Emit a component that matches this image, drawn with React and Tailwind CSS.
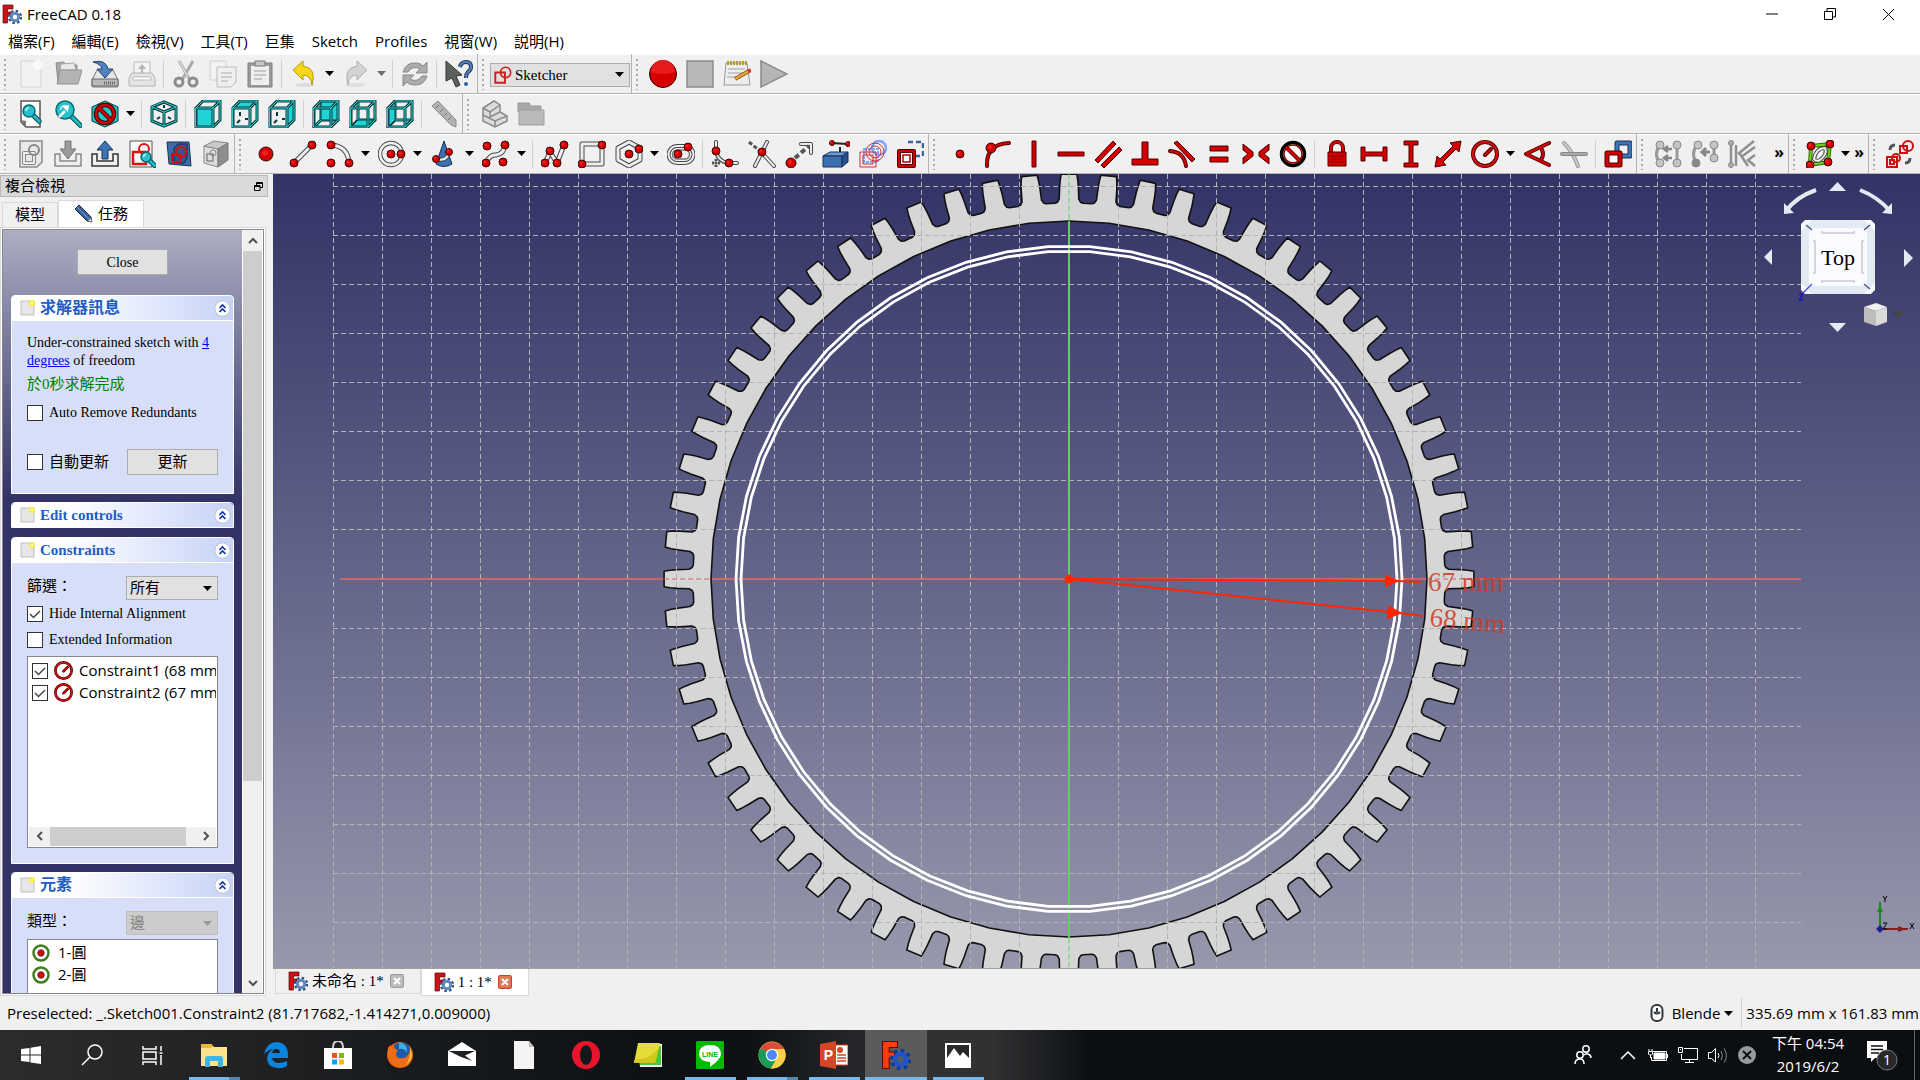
const SANS = "font-['Open_Sans','Noto_Sans_CJK_TC',sans-serif]";
const SERIF = "font-['Liberation_Serif','Noto_Sans_CJK_TC',serif]";

/* ---------- Icon helpers ---------- */

const Icon = ({ children, size = 28 }) => (
  <svg width={size} height={size} viewBox="0 0 28 28" fill="none" className="shrink-0">{children}</svg>
);

const Dot = ({ x, y, r = 4 }) => (
  <g>
    <circle cx={x} cy={y} r={r} fill="#d40000" stroke="#3a0a0a" />
    <circle cx={x - 1} cy={y - 1} r={r / 2.5} fill="#f02020" />
  </g>
);

const Tube = ({ d, w = 5, dark = '#44484a', light = '#eeeeec' }) => (
  <g strokeLinejoin="round" strokeLinecap="round">
    <path d={d} stroke={dark} strokeWidth={w} />
    <path d={d} stroke={light} strokeWidth={w - 2} />
  </g>
);

const Red = ({ d, w = 5 }) => <Tube d={d} w={w} dark="#4d0000" light="#d40000" />;

const Bar = ({ d }) => <path d={d} fill="#d40000" stroke="#4d0000" />;

const CUBE_FACES = {
  front: 'M2 8H19V27H2Z',
  top: 'M2 8L9 1H26L19 8Z',
  right: 'M19 8L26 1V20L19 27Z',
  rear: 'M9 1H26V20H9Z',
  bottom: 'M2 27L9 20H26L19 27Z',
  left: 'M2 8L9 1V20L2 27Z',
};

const Cube = ({ face, hidden }) => (
  <Icon>
    {hidden && <Tube d="M9 1V20H26M9 20L2 27" w={3} dark="#063a3a" light="#2ed8da" />}
    <path d={CUBE_FACES[face]} fill="#1fd3d6" stroke="#063a3a" />
    {!hidden && face !== 'front' && <path d="M9 12V16M6 23L9 20M14 19H17" stroke="#063a3a" strokeWidth="2" />}
    <Tube d="M2 8H19V27H2ZM2 8L9 1H26L19 8M26 1V20L19 27" w={3} dark="#063a3a" light="#2ed8da" />
  </Icon>
);

const FreeCadLogo = ({ size = 20, vivid }) => (
  <svg width={size} height={size} viewBox="0 0 20 20" className="shrink-0">
    <path d="M1 1H11V5H5.500V8H9V12H5.500V19H1Z" fill={vivid ? '#ff3c0c' : '#d01018'} stroke="#5a0808" strokeWidth=".7" />
    <circle cx="13" cy="13" r="6" fill="none" stroke={vivid ? '#0c3a9e' : '#30507e'} strokeWidth="2.400" strokeDasharray="2.360 2.352" />
    <circle cx="13" cy="13" r="3.700" fill="none" stroke={vivid ? '#1d55c8' : '#6088bc'} strokeWidth="3" />
  </svg>
);

const Caret = ({ color = '#000' }) => (
  <svg width="9" height="5" viewBox="0 0 9 5"><path d="M0 0H9L4.500 5Z" fill={color} /></svg>
);

const SketchMark = ({ size = 16 }) => (
  <Icon size={size}>
    <path d="M2 10H17V26H2Z" stroke="#cc1f1f" strokeWidth="3" />
    <circle cx="18" cy="10" r="8" stroke="#cc1f1f" strokeWidth="2.500" />
  </Icon>
);

const RadiusMark = ({ size = 28 }) => (
  <Icon size={size}>
    <circle cx="14" cy="14" r="12" stroke="#4d0000" strokeWidth="4" />
    <circle cx="14" cy="14" r="12" stroke="#cc1010" strokeWidth="2.400" />
    <Red d="M14 15L20 9" w={4} />
  </Icon>
);

const Forbidden = () => (
  <g>
    <circle cx="14" cy="14" r="9" stroke="#3a0000" strokeWidth="4.500" />
    <path d="M8 8L20 20" stroke="#3a0000" strokeWidth="4.500" />
    <circle cx="14" cy="14" r="9" stroke="#d40000" strokeWidth="2.500" />
    <path d="M8 8L20 20" stroke="#d40000" strokeWidth="2.500" />
  </g>
);

const Lens = ({ x, y, r }) => (
  <g>
    <path d={`M${x + r * 0.7} ${y + r * 0.7}l${r} ${r}`} stroke="#064a50" strokeWidth="5" strokeLinecap="round" />
    <path d={`M${x + r * 0.7} ${y + r * 0.7}l${r} ${r}`} stroke="#1bbcc4" strokeWidth="3" strokeLinecap="round" />
    <circle cx={x} cy={y} r={r} fill="#27c0cc" stroke="#0a6a72" strokeWidth="1.500" />
    <path d={`M${x - r * 0.5} ${y}a${r * 0.5} ${r * 0.5} 0 0 1 ${r * 0.5} ${-r * 0.5}`} stroke="#b8f4f6" strokeWidth="1.500" />
  </g>
);

const Tray = ({ arrow, fill }) => (
  <Icon>
    <path d="M1 14H6V21H22V14H27V26H1Z" fill="#eee" stroke={fill === '#9a9a9a' ? '#8a8a8a' : '#333'} strokeWidth="1.500" />
    <path d={arrow} fill={fill} stroke={fill === '#9a9a9a' ? '#777' : '#1c3557'} />
  </Icon>
);

/* ---------- Toolbar icons ---------- */

const ICONS = {
  new: <Icon><path d="M4 1H24V27H4Z" fill="#f1f1f1" stroke="#d2d2d2" /><circle cx="21" cy="5" r="5" fill="#fafafa" /></Icon>,
  open: <Icon><path d="M2 3L10 2L12 5H23V22H4Z" fill="#a8a8a8" stroke="#8c8c8c" /><path d="M7 4L20 3L22 10H6Z" fill="#e8e8e8" stroke="#aaa" /><path d="M6 10H28L24 24H3Z" fill="#b4b4b4" stroke="#929292" /></Icon>,
  save: (
    <Icon>
      <path d="M6 10H22L27 20V26Q27 27 26 27H2Q1 27 1 26V20Z" fill="#e6e6e6" stroke="#777" />
      <path d="M1 19H27V26H1Z" fill="#b9b9b9" stroke="#666" />
      <path d="M13 23H24" stroke="#666" strokeWidth="3" strokeDasharray="1 1" />
      <path d="M2 2Q15 -1 17 9H22L14 18L6 9H11Q10 4 2 2Z" fill="#4f82be" stroke="#1d416e" />
    </Icon>
  ),
  print: <Icon><path d="M6 2H22V16H6Z" fill="#f4f4f4" stroke="#bbb" /><path d="M14 4L18 9H15V14H13V9H10Z" fill="#b5b5b5" /><path d="M4 13H24L27 18V26H1V18Z" fill="#e4e4e4" stroke="#b0b0b0" /><path d="M5 17H23V20H5Z" fill="#fff" stroke="#bbb" /></Icon>,
  cut: <Icon><path d="M7 1L18 20M21 1L10 20" stroke="#a9a9a9" strokeWidth="3" /><path d="M7 1L16 17" stroke="#ddd" strokeWidth="1.500" /><circle cx="7" cy="22" r="4" stroke="#8c8c8c" strokeWidth="3" /><circle cx="21" cy="22" r="4" stroke="#8c8c8c" strokeWidth="3" /></Icon>,
  copy: <Icon><path d="M1 1H17V20H1Z" fill="#f3f3f3" stroke="#d0d0d0" /><path d="M8 7H27V22L22 27H8Z" fill="#efefef" stroke="#bcbcbc" /><path d="M12 13H23M12 17H23M12 21H19" stroke="#c4c4c4" strokeWidth="1.500" /></Icon>,
  paste: <Icon><path d="M2 3H26V27H2Z" fill="#9b9b9b" stroke="#7d7d7d" /><path d="M5 6H23V25H5Z" fill="#eee" /><path d="M9 1H19V6H9Z" fill="#c4c4c4" stroke="#777" /><path d="M8 11H20M8 15H20M8 19H16" stroke="#bbb" strokeWidth="1.500" /></Icon>,
  undo: <Icon><ellipse cx="15" cy="25" rx="10" ry="2" fill="#ddd" /><path d="M3 10L13 1V6Q27 8 22 25Q21 15 13 15V20Z" fill="#f4d71a" stroke="#b89a06" /></Icon>,
  redo: <Icon><ellipse cx="13" cy="25" rx="10" ry="2" fill="#dedede" /><path d="M25 10L15 1V6Q1 8 6 25Q7 15 15 15V20Z" fill="#d2d2d2" stroke="#b0b0b0" /></Icon>,
  refresh: <Icon><path d="M2 12Q5 2 15 3Q20 3 22 6L26 2V13H15L19 9Q12 5 7 12Z" fill="#ababab" stroke="#8a8a8a" /><path d="M26 16Q23 26 13 25Q8 25 6 22L2 26V15H13L9 19Q16 23 21 16Z" fill="#ababab" stroke="#8a8a8a" /></Icon>,
  whats: <Icon><path d="M1 1L17 15L11 16L15 25L11 27L7 18L1 21Z" fill="#5c615c" stroke="#333" /><path d="M15 7Q16 2 21 2Q26 2 26 7Q26 10 23 12Q21 14 21 18" stroke="#1c3557" strokeWidth="4" /><path d="M15 7Q16 2 21 2Q26 2 26 7Q26 10 23 12Q21 14 21 18" stroke="#4f82be" strokeWidth="2" /><circle cx="21" cy="24" r="2" fill="#2f5f9e" /></Icon>,
  record: <Icon><circle cx="14" cy="14" r="13.500" fill="#d40000" stroke="#320000" /><path d="M2 12A12 12 0 0 1 26 12Q14 16 2 12" fill="#e81a1a" /></Icon>,
  stop: <Icon><path d="M1 1H27V27H1Z" fill="#b8b8b8" stroke="#8a8a8a" strokeWidth="1.500" /></Icon>,
  macro: <Icon><path d="M3 3H24L27 25H1Z" fill="#eee" stroke="#999" /><path d="M4 3H24" stroke="#b29a2e" strokeWidth="4" strokeDasharray="2 1" /><path d="M5 9H22M5 13H20M4 17H14" stroke="#bbb" strokeWidth="1.500" /><path d="M12 19L26 11" stroke="#8a5a14" strokeWidth="4" /><path d="M12 19L26 11" stroke="#e7a63c" strokeWidth="2.500" /><path d="M25 11.500L28 10" stroke="#d33" strokeWidth="4" /></Icon>,
  play: <Icon><path d="M1 1L27 14L1 27Z" fill="#b5b5b5" stroke="#888" strokeWidth="1.500" /></Icon>,

  fitAll: <Icon><path d="M4 1H23V27H9L4 22Z" fill="#fafafa" stroke="#555" strokeWidth="1.500" /><path d="M4 20L9 27V21Z" fill="#777" /><Lens x={12} y={11} r={6} /></Icon>,
  fitSel: <Icon><Lens x={11} y={10} r={9} /><path d="M5 17L11 11" stroke="#fff" strokeWidth="2.500" /><path d="M8 6L15 5L14 12Z" fill="#fff" /></Icon>,
  drawStyle: <Icon><path d="M14 1L27 7V21L14 27L1 21V7Z" fill="#1fc8cc" stroke="#063a3a" /><Forbidden /></Icon>,
  iso: <Icon><Tube d="M14 2L26 7V21L14 26L2 21V7ZM2 7L14 12L26 7M14 12V26" w={3} dark="#063a3a" light="#2ed8da" /><path d="M14 5V8M7 19L10 17M21 19L18 17" stroke="#063a3a" strokeWidth="2" /></Icon>,
  front: <Cube face="front" />,
  top: <Cube face="top" />,
  right: <Cube face="right" />,
  rear: <Cube face="rear" hidden />,
  bottom: <Cube face="bottom" hidden />,
  left: <Cube face="left" hidden />,
  measure: <Icon><path d="M2 6L8 1L26 20V27L21 25Z" fill="#b2b2b2" stroke="#8a8a8a" /><path d="M9 5L6 8M13 9L10 12M17 13L14 16M21 17L18 20" stroke="#777" /></Icon>,
  part: <Icon><path d="M3 8L14 1L20 5V12L27 16V21L15 27L3 21Z" fill="#dcdcdc" stroke="#8a8a8a" strokeWidth="1.500" /><path d="M3 8L10 12L20 5M10 12V17L20 12M3 15L15 21L27 16M15 21V27" stroke="#8a8a8a" strokeWidth="1.500" /></Icon>,
  group: <Icon><path d="M1 3H12L14 6H24V12H1Z" fill="#a9a9a9" stroke="#999" /><path d="M2 10H27V25H2Z" fill="#b9b9b9" stroke="#a0a0a0" /></Icon>,

  newSketch: <Icon><path d="M3 1H25V22L20 27H3Z" fill="#e9e9e9" stroke="#8b8b8b" strokeWidth="1.500" /><Tube d="M7 13H17V23H7Z" w={4} dark="#888" /><circle cx="17" cy="10" r="5" stroke="#888" strokeWidth="2" /></Icon>,
  editSketch: <Tray arrow="M11 1H17V9H22L14 19L6 9H11Z" fill="#9a9a9a" />,
  leaveSketch: <Tray arrow="M11 19H17V10H22L14 1L6 10H11Z" fill="#3f75b5" />,
  viewSketch: <Icon><path d="M2 1H24V27H2Z" fill="#fafafa" stroke="#555" /><path d="M5 12H18V24H5Z" stroke="#e01010" strokeWidth="2.500" /><circle cx="16" cy="9" r="5" stroke="#e01010" strokeWidth="2" /><Lens x={18} y={17} r={5} /></Icon>,
  viewSection: <Icon><path d="M2 2H24L26 26L4 24Z" fill="#3d6ba8" stroke="#1b3354" /><path d="M9 8L13 4H22V18L19 23H9Z" fill="#35588c" stroke="#14284a" /><path d="M7 14H15V22H7Z" stroke="#d01010" strokeWidth="2" /><circle cx="16" cy="12" r="5" stroke="#d01010" strokeWidth="2" /></Icon>,
  mapSketch: <Icon><path d="M2 6L16 9V27L2 23Z" fill="#dcdcdc" stroke="#888" /><path d="M2 6L12 1L26 3L16 9Z" fill="#c9c9c9" stroke="#888" /><path d="M16 9L26 3V20L16 27Z" fill="#8e8e8e" stroke="#777" /><path d="M5 14H11V21H5Z" stroke="#888" strokeWidth="1.500" /><circle cx="11" cy="13" r="3" stroke="#888" /></Icon>,

  point: <Icon><Dot x={14} y={14} r={7} /></Icon>,
  line: <Icon><Tube d="M5 23L23 5" /><Dot x={5} y={23} /><Dot x={23} y={5} /></Icon>,
  arc: <Icon><Tube d="M5 5Q22 6 23 23" /><Dot x={5} y={5} /><Dot x={23} y={23} /><Dot x={5} y={23} /></Icon>,
  circle: <Icon><circle cx="13" cy="14" r="11" stroke="#44484a" strokeWidth="4.500" /><circle cx="13" cy="14" r="11" stroke="#eee" strokeWidth="2.500" /><Dot x={13} y={14} /><Dot x={23} y={14} /></Icon>,
  conic: <Icon><path d="M14 1L22 24Q14 29 6 24Z" fill="#3a70b0" stroke="#16315a" /><Tube d="M6 19Q17 22 19 12" w={4} /><Dot x={6} y={19} r={3.5} /><Dot x={19} y={12} r={3.5} /></Icon>,
  bspline: <Icon><Tube d="M4 23Q8 14 14 15Q22 14 23 5" /><Dot x={5} y={6} /><Dot x={23} y={5} /><Dot x={4} y={23} /><Dot x={21} y={22} /></Icon>,
  polyline: <Icon><Tube d="M4 23L9 12L16 23L23 5" /><Dot x={9} y={11} /><Dot x={4} y={23} /><Dot x={16} y={23} /><Dot x={23} y={5} /></Icon>,
  rect: <Icon><Tube d="M4 4H24V24H4Z" /><Dot x={24} y={5} /><Dot x={4} y={24} /></Icon>,
  polygon: <Icon><Tube d="M14 2L25 8V20L14 26L3 20V8Z" /><Dot x={14} y={14} /><Dot x={24} y={9} /></Icon>,
  slot: <Icon><Tube d="M10 6H18A8 8 0 0 1 18 23H10A8 8 0 0 1 10 6Z" w={4} /><path d="M10 10H18A4 4 0 0 1 18 19H10A4 4 0 0 1 10 10Z" stroke="#777" strokeWidth="1.500" /><Dot x={11} y={14} /><Dot x={21} y={7} /></Icon>,
  fillet: <Icon><Tube d="M5 2V10Q6 21 17 23H26" w={4} /><path d="M5 19V28M1 23H10" stroke="#555" strokeWidth="3" strokeDasharray="2 1" /><Dot x={5} y={11} /><Dot x={18} y={23} /></Icon>,
  trim: <Icon><Tube d="M7 26L19 2M14 13L26 26" w={4} /><path d="M1 2L12 11" stroke="#555" strokeWidth="3" strokeDasharray="4 2" /><Dot x={14} y={12} /></Icon>,
  extend: <Icon><Tube d="M16 4H26V13" w={4} /><path d="M10 18L24 6" stroke="#555" strokeWidth="4" strokeDasharray="5 3" /><Dot x={6} y={23} r={5} /></Icon>,
  external: <Icon><path d="M1 16L8 12H26L20 16Z" fill="#6c9cd4" stroke="#16315a" /><path d="M1 16H20V27H1Z" fill="#3a70b0" stroke="#16315a" /><path d="M20 16L26 12V22L20 27Z" fill="#24518c" stroke="#16315a" /><path d="M18 12V7M9 3L26 4" stroke="#222" strokeWidth="2" /><Dot x={10} y={3} r={2.5} /><Dot x={26} y={4} r={2.5} /></Icon>,
  carbon: <Icon><circle cx="20" cy="8" r="7" stroke="#7aa4ff" strokeWidth="2.500" /><path d="M5 9H19V22H5Z" stroke="#7aa4ff" strokeWidth="2" strokeDasharray="3 1" /><path d="M1 12H17V27H1ZM4 15H14V24H4Z" stroke="#cc3030" /><circle cx="16" cy="12" r="9" stroke="#cc3030" /><circle cx="16" cy="12" r="6" stroke="#cc3030" /></Icon>,
  construction: <Icon><path d="M12 2H27V16H20" stroke="#3465a4" strokeWidth="2.500" strokeDasharray="5 3" /><path d="M2 11H18V27H2Z" fill="#fff" /><Red d="M3 11H18V26H3Z" w={4} /><path d="M7 15H14V22H7Z" stroke="#b00000" strokeWidth="1.500" /></Icon>,

  cPoint: <Icon><Dot x={14} y={14} r={4} /></Icon>,
  cOnObject: <Icon><Red d="M4 26Q3 4 26 3" w={4} /><Dot x={8} y={8} r={5} /></Icon>,
  cVertical: <Icon><Bar d="M12 1H16V27H12Z" /></Icon>,
  cHorizontal: <Icon><Bar d="M1 12H27V16H1Z" /></Icon>,
  cParallel: <Icon><Bar d="M1 20L19 1L22 4L4 23ZM7 25L25 7L28 10L10 28Z" /></Icon>,
  cPerp: <Icon><Bar d="M11 2H17V19H27V25H1V19H11Z" /></Icon>,
  cTangent: <Icon><Red d="M2 11Q16 12 18 26" w={4} /><Bar d="M6 3L9 1L27 19L24 22Z" /></Icon>,
  cEqual: <Icon><Bar d="M5 6H23V11H5ZM5 17H23V22H5Z" /></Icon>,
  cSymmetric: <Icon><Bar d="M1 4L11 12V16L1 24V18L6 14L1 10ZM27 4L17 12V16L27 24V18L22 14L27 10Z" /></Icon>,
  cBlock: <Icon><circle cx="14" cy="14" r="11.500" fill="#fff" stroke="#000" strokeWidth="3.500" /><circle cx="14" cy="14" r="9" stroke="#900" strokeWidth="1.500" /><path d="M7 7L21 21" stroke="#4d0000" strokeWidth="4" /><path d="M7 7L21 21" stroke="#d40000" strokeWidth="2.500" /></Icon>,
  cLock: <Icon><path d="M8 14V8A6 6 0 0 1 20 8V14" stroke="#4d0000" strokeWidth="4" /><path d="M8 14V8A6 6 0 0 1 20 8V14" stroke="#d40000" strokeWidth="2.500" /><Bar d="M5 12H23V26H5Z" /><path d="M7 16H21M7 19H21M7 22H21" stroke="#800" /></Icon>,
  cHDist: <Icon><Bar d="M1 7H5V12H23V7H27V21H23V16H5V21H1Z" /></Icon>,
  cVDist: <Icon><Bar d="M7 1H21V5H16V23H21V27H7V23H12V5H7Z" /></Icon>,
  cDist: <Icon><Bar d="M27 1L25 12L22 9L9 22L12 25L1 27L3 16L6 19L19 6L16 3Z" /></Icon>,
  cRadius: <RadiusMark />,
  cAngle: <Icon><Red d="M26 3L3 14L26 25M18 8Q22 14 18 20" w={4} /></Icon>,
  cSnell: <Icon><Tube d="M4 3Q13 12 18 26" w={4} dark="#999" light="#ccc" /><Tube d="M2 14H26" w={4} dark="#888" light="#aaa" /></Icon>,
  toggle: <Icon><Tube d="M13 3H26V16H13Z" w={5} dark="#16315a" light="#3f75b5" /><path d="M3 13H16V25H3Z" fill="#fff" /><Red d="M3 13H16V25H3Z" w={5} /></Icon>,

  sel1: <Icon><path d="M6 5Q-1 14 6 24M23 5V24" stroke="#999" strokeWidth="3" /><path d="M18 9H12M18 18H12M14 6L10 9L14 12M14 15L10 18L14 21" stroke="#888" strokeWidth="2.500" /><g fill="#c4c4c4" stroke="#888"><circle cx="6" cy="5" r="4" /><circle cx="23" cy="5" r="4" /><circle cx="6" cy="23" r="4" /><circle cx="23" cy="23" r="4" /></g></Icon>,
  sel2: <Icon><path d="M6 5Q-1 14 6 24M23 5V18" stroke="#999" strokeWidth="3" /><path d="M19 12H12M15 8L11 12L15 16" stroke="#888" strokeWidth="3" /><g fill="#c4c4c4" stroke="#888"><circle cx="7" cy="5" r="4" /><circle cx="23" cy="5" r="4" /><circle cx="5" cy="23" r="4" fill="#888" /><circle cx="23" cy="18" r="4" /></g></Icon>,
  sel3: <Icon><path d="M3 3V26M8 5V26M10 14L26 1M13 17L27 7M12 14L20 26M27 15L20 20L27 26" stroke="#909090" strokeWidth="2.500" /><g fill="#aaa" stroke="#888"><circle cx="3" cy="3" r="2.500" /><circle cx="3" cy="25" r="2.500" /></g></Icon>,
  bsplineInfo: <Icon><Tube d="M5 6L24 4L22 22L4 25Z" w={4} dark="#2d6b08" light="#73d216" /><Tube d="M8 19Q10 8 19 8Q22 14 14 20Q10 22 8 19Z" w={4} /><Dot x={5} y={6} /><Dot x={24} y={4} /><Dot x={22} y={22} /><Dot x={4} y={25} /></Icon>,
  virtual: <Icon><path d="M14 6H21V13H14ZM1 17H11V27H1ZM4 20H8V24H4Z" stroke="#cc1010" strokeWidth="2" /><circle cx="22" cy="6" r="5" stroke="#cc1010" strokeWidth="2" /><circle cx="10" cy="18" r="4" stroke="#cc1010" strokeWidth="2" /><path d="M4 10Q4 5 9 5M24 18Q24 23 19 23" stroke="#555" strokeWidth="3" /></Icon>,
};

const ROW_1A = ['new', 'open', 'save', 'print', '|', 'cut', 'copy', 'paste', '|', 'undo', 'v', 'redo', 'v-', '|', 'refresh', '|', 'whats'];
const ROW_1B = ['record', 'stop', 'macro', 'play'];
const ROW_2A = ['fitAll', 'fitSel', 'drawStyle', 'v', '|', 'iso', '|', 'front', 'top', 'right', '|', 'rear', 'bottom', 'left', '|', 'measure'];
const ROW_2B = ['part', 'group'];
const ROW_3 = [
  ['newSketch', 'editSketch', 'leaveSketch', 'viewSketch', 'viewSection', 'mapSketch'],
  ['point', 'line', 'arc', 'v', 'circle', 'v', 'conic', 'v', 'bspline', 'v', '|', 'polyline', 'rect', 'polygon', 'v', 'slot', '|', 'fillet', 'trim', 'extend', 'external', 'carbon', 'construction'],
  ['cPoint', 'cOnObject', 'cVertical', 'cHorizontal', 'cParallel', 'cPerp', 'cTangent', 'cEqual', 'cSymmetric', 'cBlock', '|', 'cLock', 'cHDist', 'cVDist', 'cDist', 'cRadius', 'v', 'cAngle', 'cSnell', '|', 'toggle'],
  ['sel1', 'sel2', 'sel3', '»»'],
  ['bsplineInfo', 'v', '»'],
  ['virtual'],
];

function ToolGroup({ items, children, last }) {
  return (
    <div className={`flex h-full shrink-0 items-center ${last ? '' : 'border-r border-[#b4b4b4]'}`}>
      <svg width="12" height="32" className="shrink-0"><path d="M5 1V32" stroke="#a8a8a8" strokeWidth="2" strokeDasharray="2 3" /></svg>
      {items?.map((item, i) => {
        if (item === '|') return <span key={i} className="mx-[3px] h-7 w-px shrink-0 bg-[#cfcfcf]" />;
        if (item[0] === 'v' && item.length < 3) {
          return <button key={i} aria-label="More" className="flex w-[15px] shrink-0 justify-center"><Caret color={item === 'v' ? '#000' : '#6d6d6d'} /></button>;
        }
        if (item[0] === '»') {
          return <button key={i} aria-label="Show more tools" className={`shrink-0 pr-1 pb-1 text-right text-base leading-4 font-bold ${item === '»' ? 'w-[15px]' : 'w-7'}`}>»</button>;
        }
        return <button key={i} aria-label={item} className="flex w-[37px] shrink-0 justify-center">{ICONS[item]}</button>;
      })}
      {children}
    </div>
  );
}

function ToolRow({ children }) {
  return <div className="flex h-10 items-center overflow-hidden border-b border-[#b4b4b4] shadow-[inset_0_1px_0_#fff]">{children}</div>;
}

/* ---------- Form controls ---------- */

function CheckBox({ id, checked }) {
  return (
    <span className="grid size-4 shrink-0">
      <input id={id} type="checkbox" defaultChecked={checked} className="peer size-4 appearance-none border border-[#333] bg-white [grid-area:1/1]" />
      <svg viewBox="0 0 16 16" className="pointer-events-none size-4 opacity-0 [grid-area:1/1] peer-checked:opacity-100">
        <path d="M3 8L6.500 11.500L13 5" fill="none" stroke="#444" strokeWidth="1.500" />
      </svg>
    </span>
  );
}

function Combo({ id, value, disabled, icon, className }) {
  return (
    <span className={`grid items-center ${className}`}>
      <select
        id={id}
        disabled={disabled}
        aria-label={value}
        className={`h-full w-full appearance-none border [grid-area:1/1] ${icon ? 'pl-6' : 'pl-[3px]'} ${disabled ? 'border-[#bfbfbf] bg-[#cccccc] text-[#838383]' : 'border-[#adadad] bg-[#e1e1e1] text-black'}`}
      >
        <option>{value}</option>
      </select>
      {icon && <span className="pointer-events-none ml-1 justify-self-start [grid-area:1/1]">{icon}</span>}
      <span className="pointer-events-none mr-1.5 flex justify-self-end [grid-area:1/1]"><Caret color={disabled ? '#999' : '#000'} /></span>
    </span>
  );
}

/* ---------- Left dock ---------- */

function TaskGroup({ title, cjk, children, className = '' }) {
  return (
    <section className={`shrink-0 overflow-hidden rounded-t border border-white ${className}`}>
      <h2 className="flex h-6 items-center bg-linear-to-r from-white from-25% to-[#c6d3f7] pr-[2px] pl-2">
        <svg width="16" height="16" viewBox="0 0 16 16" className="mr-1">
          <path d="M1 1H14V15H1Z" fill="#e6e6e6" stroke="#c0c0c0" />
          <circle cx="12" cy="3" r="3" fill="#f6ee3a" />
          <circle cx="12" cy="3" r="1.200" fill="#fffbc0" />
        </svg>
        <span className={`flex-1 font-bold text-[#215dc6] ${cjk ? 'text-base' : 'text-[15px]'}`}>{title}</span>
        <button aria-label={`Collapse ${title}`}>
          <svg width="17" height="17" viewBox="0 0 17 17">
            <circle cx="8.500" cy="8.500" r="7.700" fill="#fff" stroke="#b9bfd0" />
            <path d="M5.500 8L8.500 5L11.500 8M5.500 12L8.500 9L11.500 12" fill="none" stroke="#0c36a0" strokeWidth="1.600" />
          </svg>
        </button>
      </h2>
      {children && <div className="border-t border-white bg-[#d6dff7] px-[15px]">{children}</div>}
    </section>
  );
}

const CONSTRAINTS = ['Constraint1 (68 mm)', 'Constraint2 (67 mm)'];
const ELEMENTS = ['1-圓', '2-圓'];

function Chevron({ d }) {
  return <svg width="10" height="10" viewBox="0 0 10 10"><path d={d} fill="none" stroke="#505050" strokeWidth="2" /></svg>;
}

function Dock() {
  return (
    <aside className={`flex w-[268px] shrink-0 flex-col pt-px text-[15px] ${SERIF}`}>
      <div className="flex h-[22px] shrink-0 items-center justify-between border border-[#b8b8b8] bg-[#dadada] pr-1 pl-1">
        <span className="leading-5">複合檢視</span>
        <button aria-label="Float panel">
          <svg width="9" height="9" viewBox="0 0 9 9"><path d="M2.500 3V.5H8.500V5.500H6M.5 3.500H6V8.500H.5ZM.5 4.500H6M2.500 1.500H8" fill="none" stroke="#000" /></svg>
        </button>
      </div>

      <div className="flex h-[30px] shrink-0 items-end px-[2px]">
        <button className="h-[25px] w-14 border border-b-0 border-[#d9d9d9] bg-[#f0f0f0] text-[15px] leading-6">模型</button>
        <button className="flex h-[27px] w-[86px] items-center justify-center gap-1 border border-b-0 border-[#d9d9d9] bg-white text-[15px] leading-6">
          <svg width="20" height="20" viewBox="0 0 20 20"><path d="M1 5L5 1L17 13L18 18L13 17Z" fill="#3a6396" stroke="#152c4c" /><path d="M3 3L15 15" stroke="#6f9ccc" /><path d="M14 17L18 18L17 14Z" fill="#d8c8a8" /></svg>
          任務
        </button>
      </div>

      <div className="mr-[2px] flex min-h-0 flex-1 border border-[#d9d9d9] bg-white p-px">
        <div className="flex min-h-0 min-w-0 flex-1 border border-[#828790]">
          <div className="flex min-h-0 min-w-0 flex-1 flex-col overflow-hidden bg-linear-to-b from-[#aeaec2] to-[#333366] to-[270px] px-2">
            <button className="mt-[19px] h-[26px] w-[91px] shrink-0 self-center border border-[#adadad] bg-[#e1e1e1] text-[14px]">Close</button>

            <TaskGroup title="求解器訊息" cjk className="mt-5 h-[199px] bg-[#d6dff7]">
              <p className="pt-[13px] text-[14px] leading-[18px]">
                Under-constrained sketch with <a href="#dof" className="text-[#0000ff] underline">4 degrees</a> of freedom
              </p>
              <p className="mt-0.5 text-[15px] leading-6 text-[#008000]">於0秒求解完成</p>
              <div className="mt-[7px] flex items-center gap-1.5 text-[14px] leading-5">
                <CheckBox id="redundants" />
                <label htmlFor="redundants">Auto Remove Redundants</label>
              </div>
              <div className="mt-[26px] flex items-center gap-1.5">
                <CheckBox id="auto-update" />
                <label htmlFor="auto-update" className="flex-1">自動更新</label>
                <button className="h-[26px] w-[91px] border border-[#adadad] bg-[#e1e1e1] text-[15px] leading-5">更新</button>
              </div>
            </TaskGroup>

            <TaskGroup title="Edit controls" className="mt-2" />

            <TaskGroup title="Constraints" className="mt-[9px] h-[327px] bg-[#d6dff7]">
              <div className="flex items-center justify-between pt-3">
                <label htmlFor="filter">篩選：</label>
                <Combo id="filter" value="所有" className="h-[21px] w-[92px]" />
              </div>
              <div className="mt-1.5 flex items-center gap-1.5 text-[14px] leading-5">
                <CheckBox id="hide-internal" checked />
                <label htmlFor="hide-internal">Hide Internal Alignment</label>
              </div>
              <div className="mt-1.5 flex items-center gap-1.5 text-[14px] leading-5">
                <CheckBox id="extended" />
                <label htmlFor="extended">Extended Information</label>
              </div>
              <div className={`mt-1.5 flex h-[192px] flex-col border border-[#828790] bg-white p-px ${SANS}`}>
                <ul className="flex-1 overflow-hidden pt-0.5 pl-[3px]">
                  {CONSTRAINTS.map((name) => (
                    <li key={name} className="flex h-[22px] items-center gap-1.5 whitespace-nowrap">
                      <CheckBox id={name} checked />
                      <RadiusMark size={19} />
                      <label htmlFor={name} className="text-[15px]">{name}</label>
                    </li>
                  ))}
                </ul>
                <div className="flex h-[19px] items-center bg-[#f0f0f0]">
                  <button aria-label="Scroll left" className="flex w-[21px] justify-center"><Chevron d="M7 1L3 5L7 9" /></button>
                  <span className="h-full flex-1 bg-[#cdcdcd]" />
                  <button aria-label="Scroll right" className="ml-[9px] flex w-[21px] justify-center"><Chevron d="M3 1L7 5L3 9" /></button>
                </div>
              </div>
            </TaskGroup>

            <TaskGroup title="元素" cjk className="mt-2">
              <div className="flex items-center justify-between pt-3">
                <label htmlFor="type">類型：</label>
                <Combo id="type" value="邊" disabled className="h-[21px] w-[92px]" />
              </div>
              <ul className={`mt-1.5 h-[160px] border border-[#828790] bg-white pt-0.5 pl-1 ${SANS}`}>
                {ELEMENTS.map((name) => (
                  <li key={name} className="flex h-[22px] items-center gap-2">
                    <svg width="18" height="18" viewBox="0 0 18 18"><circle cx="9" cy="9" r="7.500" fill="#fff" stroke="#3f7d1c" strokeWidth="2.500" /><circle cx="9" cy="9" r="3.200" fill="#cc1010" stroke="#7a1a10" /></svg>
                    {name}
                  </li>
                ))}
              </ul>
            </TaskGroup>
          </div>

          <div className="flex w-[21px] shrink-0 flex-col items-center border-x border-white bg-[#f0f0f0]">
            <button aria-label="Scroll up" className="flex h-[21px] items-center"><Chevron d="M1 7L5 3L9 7" /></button>
            <span className="h-[530px] w-full bg-[#cdcdcd]" />
            <button aria-label="Scroll down" className="mt-auto flex h-[21px] items-center"><Chevron d="M1 3L5 7L9 3" /></button>
          </div>
        </div>
      </div>
    </aside>
  );
}

/* ---------- 3D view ---------- */

const CX = 796;
const CY = 405;
const CELL = 49.05;
const TEETH = 64;

const polar = (r, a) => `${(CX + r * Math.cos(a)).toFixed(1)} ${(CY + r * Math.sin(a)).toFixed(1)}`;

const ring = (r, n) => `M${Array.from({ length: n }, (_, i) => polar(r, (i * 2 * Math.PI) / n)).join('L')}Z`;

// One tooth as [radius, half width] pairs, from the root up to the tip
const FLANK = [[376, 14], [377, 11.5], [380, 9.8], [392, 9.4], [399, 8.8], [405, 7.8]];

function gearPath() {
  const pts = [];
  for (let i = 0; i < TEETH; i++) {
    const a = (i * 2 * Math.PI) / TEETH;
    FLANK.forEach(([r, w]) => pts.push(polar(r, a - w / r)));
    [...FLANK].reverse().forEach(([r, w]) => pts.push(polar(r, a + w / r)));
  }
  return `M${pts.join('L')}Z`;
}

const range = (from, to) => Array.from({ length: to - from + 1 }, (_, i) => from + i);

function Scene() {
  return (
    <svg viewBox="0 0 1647 794" preserveAspectRatio="xMidYMid slice" className="h-full w-full" fill="none">
      <path d={`M67 ${CY}H1528`} stroke="#cc6666" strokeWidth="2" />
      <path d={gearPath() + ring(358, 56)} fill="#d6d6d6" fillRule="evenodd" stroke="#111" strokeWidth="1.600" strokeLinejoin="round" />
      <g stroke="#b3b3b3" strokeDasharray="5 3" shapeRendering="crispEdges">
        {range(-15, 14).filter((i) => i !== 0).map((i) => <path key={i} d={`M${Math.floor(CX + i * CELL)} 0V794`} />)}
        {range(-8, 7).filter((i) => i !== 0).map((i) => <path key={i} d={`M60 ${Math.floor(CY + i * CELL)}H1528`} />)}
      </g>
      <path d={`M391 ${CY}H438M1154 ${CY}H1201`} stroke="#cc6666" strokeDasharray="5 3" />
      <path d="M796 0V47M796 764V794" stroke="#66cc66" strokeDasharray="5 3" />
      <path d="M796 47V764" stroke="#66cc66" strokeWidth="2" />
      <path d={ring(333, 50) + ring(328, 50)} stroke="#fff" strokeWidth="2.800" />

      <g stroke="#ff2600" fill="#ff2600" strokeWidth="2">
        <circle cx={CX} cy={CY} r="3.500" />
        <path d={`M${CX} ${CY}L1124 407L1148 408M${CX} ${CY}L1127 439L1150 442`} fill="none" />
        <path d="M1113 402L1124 407L1113 412ZM1116 433L1127 439L1115 444Z" />
      </g>
      <g fill="#cc3a20" fillOpacity=".85" fontSize="27" fontFamily="Liberation Serif, serif">
        <text x="1155" y="417">67 mm</text>
        <text x="1156" y="452" transform="rotate(5.500 1156 452)">68 mm</text>
      </g>
    </svg>
  );
}

function NavCube() {
  return (
    <svg width="156" height="170" viewBox="0 0 156 170" fill="#e2eaf2" className="absolute top-2 right-0">
      <path d="M65 9L73.500 0L82 9ZM65 141L73.500 150L82 141ZM8 67V83L0 75ZM140 67V85L149 76Z" />
      <g stroke="#e2eaf2" strokeWidth="4" fill="none">
        <path d="M52 8Q32 15 22 29M96 8Q114 15 126 29" />
      </g>
      <path d="M20 21L20 32L30 31ZM128 21V32L118 31Z" />
      <rect x="37" y="38" width="74" height="74" rx="11" />
      <path d="M48 38L37 49V42L41 38ZM100 38L111 49V42L107 38ZM37 101L48 112H41L37 108ZM111 101L100 112H107L111 108Z" fill="#f8fafc" />
      <rect x="45" y="46" width="58" height="58" rx="3" fill="#fafbfe" />
      <g stroke="#c8c8d8" strokeWidth="1.500" fill="none">
        <path d="M58 49V51H90V49M58 101V99H90V101M49 59H51V91H49M100 59H98V91H100" />
        <path d="M42 43L48 48M106 43L100 48M106 107L100 102" stroke="#50508a" />
      </g>
      <path d="M48 102L39 111" stroke="#5050e8" strokeWidth="1.500" />
      <path d="M35 112H39L35 118H39" stroke="#0000e0" fill="none" />
      <text x="74" y="83" textAnchor="middle" fontSize="22" fill="#000" fontFamily="Liberation Serif, serif">Top</text>
      <path d="M100 125L112 121L123 125L112 129Z" fill="#f0f0f0" />
      <path d="M100 125L112 129V144L100 140Z" fill="#bdbdbd" />
      <path d="M112 129L123 125V140L112 144Z" fill="#dadada" />
      <path d="M127 129H141L134 136Z" fill="#444" />
    </svg>
  );
}

function AxisCross() {
  return (
    <svg width="44" height="44" viewBox="0 0 44 44" className="absolute right-0 bottom-7" fill="none">
      <path d="M4 33V6" stroke="#208820" strokeWidth="2" />
      <path d="M4 8L7 16H1Z" fill="#208820" />
      <path d="M4 33H32" stroke="#882020" strokeWidth="2" />
      <path d="M30 33L22 30V36Z" fill="#882020" />
      <path d="M4 29L8 33L4 37L0 33Z" fill="#202088" />
      <path d="M7 0L9 3L11 0M9 3V6M7 27H11L7 33H11M34 27L38 33M38 27L34 33" stroke="#000" />
    </svg>
  );
}

function DocTab({ title, active }) {
  return (
    <div className={`flex items-center gap-1 border border-t-0 border-[#d9d9d9] pr-4 pl-3 ${active ? 'h-[27px] bg-white' : 'h-[25px]'}`}>
      <FreeCadLogo />
      <button className="leading-6">{title}</button>
      <button aria-label={`Close ${title}`} className={`ml-0.5 flex size-[14px] items-center justify-center rounded-[2px] border ${active ? 'border-[#d0402c] bg-[#e07858]' : 'border-[#9a9a9a] bg-[#bcbcbc]'}`}>
        <svg width="8" height="8" viewBox="0 0 8 8"><path d="M1 1L7 7M7 1L1 7" stroke="#fff" strokeWidth="2" /></svg>
      </button>
    </div>
  );
}

/* ---------- Taskbar ---------- */

const APPS = [
  { name: 'Start', icon: <path d="M4 8L12.500 7V13.500H4ZM13.500 6.800L24 5V13.500H13.500ZM4 14.500H12.500V21L4 20ZM13.500 14.500H24V23L13.500 21.500Z" fill="#fff" /> },
  { name: 'Search', icon: <g stroke="#fff" strokeWidth="1.500"><circle cx="17" cy="11" r="7" /><path d="M12 16L4 24" /></g> },
  { name: 'Task view', icon: <path d="M4 5V8H17V5M4 24V21H17V24M4 11H17V18H4ZM22 5V10M22 14V24M20.500 12H23.500" stroke="#fff" strokeWidth="1.500" /> },
  { name: 'Explorer', run: 2, icon: <g><path d="M1 4H12L14 6H27V25H1Z" fill="#fce28c" /><path d="M1 3H12V7H1Z" fill="#e8b83a" /><path d="M5 26V18Q5 15 8 15H20Q23 15 23 18V26H18V20H10V26Z" fill="#3fb4e8" /></g> },
  { name: 'Edge', icon: <path d="M2 13Q5 1 15 1Q26 2 26 14V17H10Q11 22 17 22Q21 22 25 20V25Q20 28 15 27Q5 26 5 17Q6 11 11 8Q8 8 2 13ZM10 12H18Q18 8 14 8Q11 8 10 12Z" fill="#0a84dc" fillRule="evenodd" /> },
  { name: 'Store', icon: <g><path d="M9 7Q9 0 14 0Q19 0 19 7" stroke="#ccc" strokeWidth="2" /><path d="M0 7H28V28H0Z" fill="#fff" /><path d="M8 12H13V17H8Z" fill="#f25022" /><path d="M15 12H20V17H15Z" fill="#7fba00" /><path d="M8 18.500H13V23.500H8Z" fill="#00a4ef" /><path d="M15 18.500H20V23.500H15Z" fill="#ffb900" /></g> },
  { name: 'Firefox', icon: <g><circle cx="14" cy="14" r="13" fill="#e8600c" /><path d="M8 4Q15 -1 23 4Q27 12 21 18L11 17Z" fill="#1d5aa8" /><path d="M13 1Q22 3 21 12Q19 7 13 8Z" fill="#3fb0e0" /><path d="M2 7L4 4Q5 8 10 8Q13 9 10 12Q9 15 12 17Q18 19 22 14Q25 10 23 4Q29 12 25 20Q20 28 11 26Q0 22 2 7Z" fill="#ee6c14" /><path d="M24 7Q29 17 20 24Q25 16 24 7Z" fill="#fcc83c" /></g> },
  { name: 'Mail', icon: <g><path d="M0 10L14 1L28 10V25H0Z" fill="#fff" /><path d="M1 10H27L17 14.500L24 20L12 15.500Z" fill="#1e2022" /></g> },
  { name: 'Notepad', icon: <g><path d="M4 0H19L24 6V28H4Z" fill="#f4f4f4" /><path d="M19 0V6H24Z" fill="#bbb" /></g> },
  { name: 'Opera', icon: <g><circle cx="14" cy="14" r="14" fill="#e8142c" /><ellipse cx="14" cy="14" rx="6" ry="10" fill="#14181b" /></g> },
  { name: 'Sticky notes', icon: <g><path d="M4 3H28V26H6Z" fill="#f4f4f4" /><path d="M5 5H27V24H6Z" fill="#48c93c" /><path d="M4 2H26L21 22H0Z" fill="#e4dc3a" /><path d="M0 19Q16 18 25 7L21 22H0Z" fill="#d4c81c" /></g> },
  { name: 'LINE', run: 1, icon: <g><rect x="-1" y="-1" width="30" height="30" rx="5" fill="#00b900" /><path d="M14 4Q25 4 25 13Q25 18 14 26V21Q3 20 3 13Q3 4 14 4Z" fill="#fff" /><text x="14" y="15.500" textAnchor="middle" fontSize="7" fontWeight="bold" fill="#00b900" fontFamily="Liberation Sans, sans-serif">LINE</text></g> },
  { name: 'Chrome', run: 2, icon: <g><circle cx="14" cy="14" r="13.500" fill="#fdd043" /><path d="M14 14L2.500 7.500A13.500 13.500 0 0 1 26 8H14Z" fill="#dd4b3e" /><path d="M14 14L2.500 7.200A13.500 13.500 0 0 0 13 27.500L19 17Z" fill="#1a9c58" /><path d="M14 8H26.200A13.500 13.500 0 0 1 13 27.500L19 17Z" fill="#fdd043" /><circle cx="14" cy="14" r="6.200" fill="#fff" /><circle cx="14" cy="14" r="5" fill="#4a8af4" /></g> },
  { name: 'PowerPoint', run: 1, icon: <g><path d="M14 4H28V24H14Z" fill="#fff" stroke="#d24726" /><path d="M17 14H26M17 17H26M17 20H26" stroke="#d24726" strokeWidth="1.500" /><circle cx="20" cy="9" r="3" fill="#d24726" /><path d="M0 3L16 0V28L0 25Z" fill="#d24726" /><text x="8.500" y="19" textAnchor="middle" fontSize="14" fontWeight="bold" fill="#fff" fontFamily="Liberation Sans, sans-serif">P</text></g> },
  { name: 'FreeCAD', run: 1, active: true },
  { name: 'Photos', run: 1, icon: <g><path d="M1 2H27V27H1Z" fill="#fff" /><path d="M3 4H25V17L19 11L16 15L10 7L3 17Z" fill="#26282a" /></g> },
];

function TaskButton({ app }) {
  return (
    <button aria-label={app.name} className={`flex h-full w-[62px] shrink-0 flex-col items-center ${app.active ? 'bg-[#5a5b5c]' : ''}`}>
      <span className="flex flex-1 items-center">
        {app.icon ? <Icon>{app.icon}</Icon> : <FreeCadLogo size={30} vivid />}
      </span>
      {app.run && (
        <span className={`-mt-[3px] flex h-[3px] ${app.active ? 'w-full' : 'w-[51px]'}`}>
          <span className="flex-1 bg-[#76b9ed]" />
          {app.run === 2 && <span className="w-[11px] bg-[#5187b0]" />}
        </span>
      )}
    </button>
  );
}

function Taskbar() {
  return (
    <footer className="flex h-[50px] shrink-0 items-center bg-linear-to-r from-[#2b2c2e] via-[#0e1113] via-34% to-[#0b0e11] text-white">
      <div className="flex h-full w-[992px] shrink-0 bg-linear-to-r from-transparent from-75% to-[#303133] to-92%">
        {APPS.slice(0, 3).map((app) => (
          <div key={app.name} className="w-[61px] shrink-0"><TaskButton app={app} /></div>
        ))}
        {APPS.slice(3).map((app) => <TaskButton key={app.name} app={app} />)}
      </div>
      <div className="h-full w-24 bg-linear-to-r from-[#303133] to-transparent" />

      <div className="ml-auto flex h-full items-center">
        <button aria-label="People" className="flex w-11 justify-center">
          <svg width="18" height="20" viewBox="0 0 18 20" fill="none" stroke="#fff" strokeWidth="1.500"><circle cx="12" cy="4" r="3.200" /><circle cx="6" cy="10" r="3.200" /><path d="M1 19Q1 14 6 14Q10 14 10 19M10 10Q12 8 14 9Q17 10 17 13" /></svg>
        </button>
        <button aria-label="Hidden icons" className="ml-2 flex w-[30px] justify-center">
          <svg width="16" height="10" viewBox="0 0 16 10" fill="none" stroke="#fff" strokeWidth="1.500"><path d="M1 9L8 2L15 9" /></svg>
        </button>
        <button aria-label="Battery" className="flex w-[30px] justify-center">
          <svg width="20" height="14" viewBox="0 0 20 14" fill="none" stroke="#fff"><path d="M5 3.500H18.500V12.500H3.500V9" /><path d="M6 5H17V11H6Z" fill="#fff" /><path d="M19.500 6V10M1 1V3M4 1V3M.5 3.500H4.500V6L3.500 7H1.500L.5 6ZM2.500 7V10" /></svg>
        </button>
        <button aria-label="Network" className="flex w-[30px] justify-center">
          <svg width="20" height="17" viewBox="0 0 20 17" fill="none" stroke="#fff"><path d="M6 1.500H19.500V12.500H3.500V7M11.500 12.500V16M7 15.500H16" /><path d="M.5 .5H4.500V5.500H.5ZM2 2.500H3" /></svg>
        </button>
        <button aria-label="Volume" className="flex w-[30px] justify-center">
          <svg width="20" height="17" viewBox="0 0 20 17" fill="none" stroke="#fff"><path d="M.5 5.500H3.500L7.500 1.500V15L3.500 11.500H.5Z" /><path d="M10 6Q12 8.500 10 11" /><path d="M13 4Q16 8.500 13 13M16 1.500Q21 8.500 16 15.500" stroke="#888" /></svg>
        </button>
        <button aria-label="Status" className="flex w-[28px] justify-center">
          <svg width="18" height="18" viewBox="0 0 18 18"><circle cx="9" cy="9" r="9" fill="#9a9a9a" /><path d="M5 5L13 13M13 5L5 13" stroke="#111" strokeWidth="2" /></svg>
        </button>
        <button className="flex w-[94px] flex-col items-center text-[15px] leading-[23px]">
          <span>下午 04:54</span>
          <span>2019/6/2</span>
        </button>
        <button aria-label="Notifications" className="ml-1 flex w-[47px] justify-center">
          <svg width="31" height="31" viewBox="0 0 31 31">
            <path d="M0 1H20V18H8L4 22V18H0Z" fill="#fff" />
            <path d="M4 6H16M4 9.500H16M4 13H12" stroke="#111" strokeWidth="1.500" />
            <circle cx="20" cy="20" r="10" fill="#26282a" stroke="#777" />
            <text x="20" y="25" textAnchor="middle" fontSize="14" fill="#fff" fontFamily="Open Sans, sans-serif">1</text>
          </svg>
        </button>
        <span className="mr-[5px] ml-2 h-full w-px bg-[#666]" />
      </div>
    </footer>
  );
}

/* ---------- Window ---------- */

const MENUS = ['檔案(F)', '編輯(E)', '檢視(V)', '工具(T)', '巨集', 'Sketch', 'Profiles', '視窗(W)', '説明(H)'];

export default function App() {
  return (
    <div className={`flex h-screen flex-col overflow-hidden bg-[#f0f0f0] text-[15px] text-black ${SANS}`}>
      <header className="flex h-7 shrink-0 items-center bg-white pl-0.5">
        <FreeCadLogo />
        <h1 className="ml-[5px] flex-1 text-[15px]">FreeCAD 0.18</h1>
        <button aria-label="Minimize" className="flex w-[58px] justify-center"><svg width="12" height="12"><path d="M0 6H12" stroke="#000" /></svg></button>
        <button aria-label="Restore" className="flex w-[58px] justify-center"><svg width="12" height="12" fill="none" stroke="#000"><path d="M.5 3.500H8.500V11.500H.5ZM3 3V.5H11.500V9H9" /></svg></button>
        <button aria-label="Close window" className="mr-[3px] flex w-[58px] justify-center"><svg width="13" height="13" stroke="#000"><path d="M1 1L12 12M12 1L1 12" /></svg></button>
      </header>

      <nav className="flex h-[26px] shrink-0 items-center gap-[17px] bg-white pl-2">
        {MENUS.map((menu) => <button key={menu} className="leading-6">{menu}</button>)}
      </nav>

      <div className="shrink-0">
        <ToolRow>
          <ToolGroup items={ROW_1A} />
          <ToolGroup>
            <Combo id="workbench" value="Sketcher" icon={<SketchMark size={18} />} className={`mr-px h-[22px] w-[140px] text-[15px] ${SERIF}`} />
          </ToolGroup>
          <ToolGroup items={ROW_1B} last />
        </ToolRow>
        <ToolRow>
          <ToolGroup items={ROW_2A} />
          <ToolGroup items={ROW_2B} last />
        </ToolRow>
        <ToolRow>
          {ROW_3.map((items, i) => <ToolGroup key={i} items={items} last={i === ROW_3.length - 1} />)}
        </ToolRow>
      </div>

      <div className="flex min-h-0 flex-1">
        <Dock />
        <main className="ml-[5px] flex min-w-0 flex-1 flex-col">
          <div className="relative min-h-0 flex-1 overflow-hidden border-b border-[#a0a0a0] bg-linear-to-b from-[#333366] to-[#9898ac]">
            <Scene />
            <NavCube />
            <AxisCross />
          </div>
          <div className={`flex h-[27px] shrink-0 items-start pl-[2px] ${SERIF}`}>
            <DocTab title="未命名 : 1*" />
            <DocTab title="1 : 1*" active />
          </div>
        </main>
      </div>

      <div className="flex h-[34px] shrink-0 items-center pr-px pl-[7px]">
        <span className="flex-1">Preselected: _.Sketch001.Constraint2 (81.717682,-1.414271,0.009000)</span>
        <button className="mr-2 flex items-center gap-1">
          <svg width="14" height="18" viewBox="0 0 14 18" className="mr-1"><rect x="1.500" y="1" width="11" height="16" rx="5" fill="#fff" stroke="#33383c" strokeWidth="2" /><path d="M7 4V8M4 8Q7 11 10 8" stroke="#33383c" strokeWidth="2" fill="none" /></svg>
          Blende
          <Caret />
        </button>
        <span className="h-[30px] w-px bg-[#cfcfcf]" />
        <span className="pl-1">335.69 mm x 161.83 mm</span>
      </div>

      <Taskbar />
    </div>
  );
}
